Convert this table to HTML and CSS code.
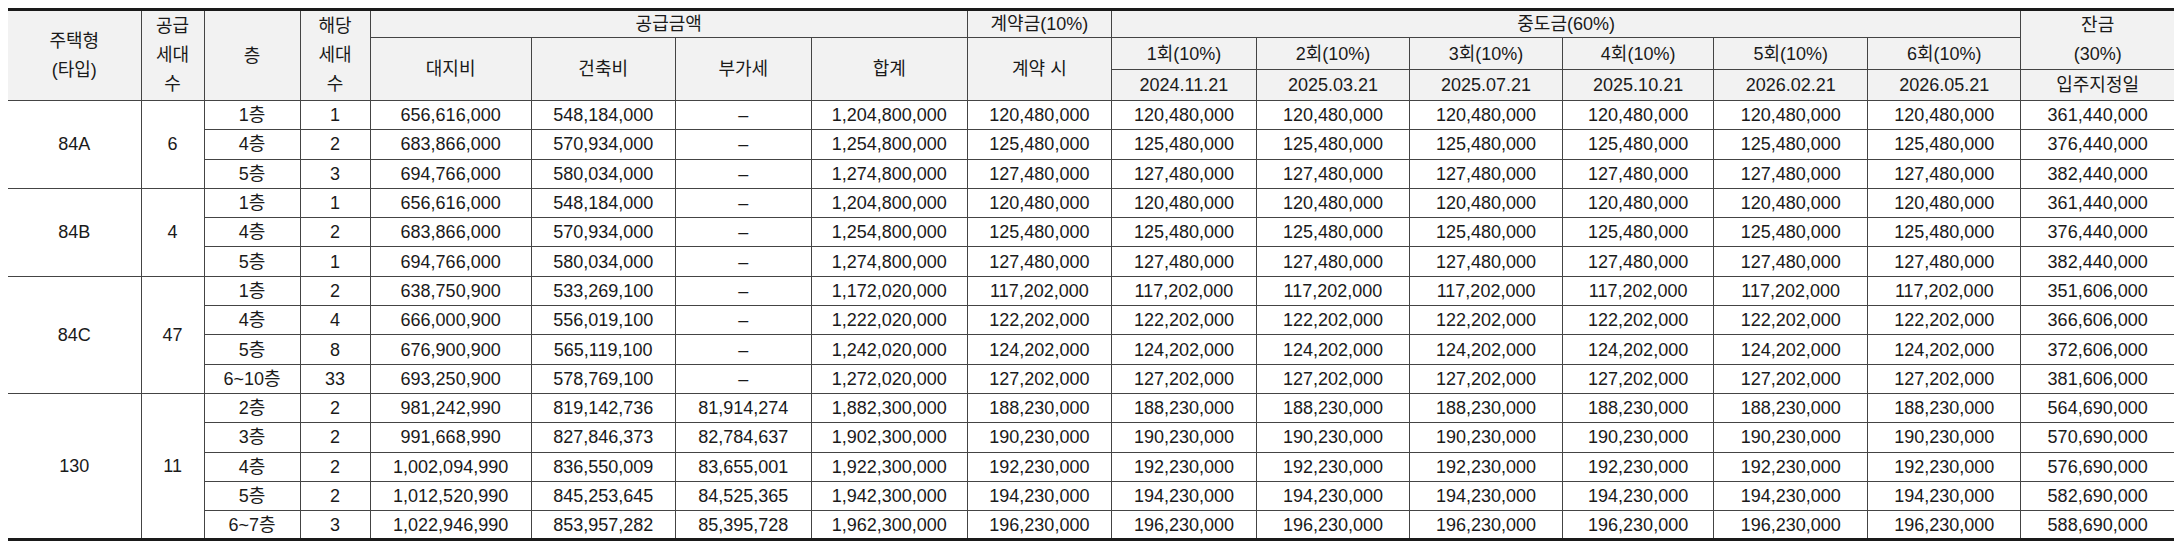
FILE: index.html
```html
<!DOCTYPE html>
<html lang="ko">
<head>
<meta charset="utf-8">
<title>공급금액 및 납부일정</title>
<link rel="stylesheet" href="styles.css">
</head>
<body>
<table class="price">
  <colgroup>
    <col class="c-type"><col class="c-sup"><col class="c-floor"><col class="c-units">
    <col class="c-land"><col class="c-build"><col class="c-vat"><col class="c-sum">
    <col class="c-dep">
    <col class="c-m1"><col class="c-m2"><col class="c-m3"><col class="c-m4"><col class="c-m5"><col class="c-m6">
    <col class="c-bal">
  </colgroup>
  <thead>
    <tr class="h1">
      <th rowspan="3" class="tall">주택형<br>(타입)</th>
      <th rowspan="3" class="tall">공급<br>세대<br>수</th>
      <th rowspan="3">층</th>
      <th rowspan="3" class="tall">해당<br>세대<br>수</th>
      <th colspan="4">공급금액</th>
      <th>계약금(10%)</th>
      <th colspan="6">중도금(60%)</th>
      <th rowspan="2" class="tall">잔금<br>(30%)</th>
    </tr>
    <tr class="h2">
      <th rowspan="2">대지비</th>
      <th rowspan="2">건축비</th>
      <th rowspan="2">부가세</th>
      <th rowspan="2">합계</th>
      <th rowspan="2">계약 시</th>
      <th>1회(10%)</th>
      <th>2회(10%)</th>
      <th>3회(10%)</th>
      <th>4회(10%)</th>
      <th>5회(10%)</th>
      <th>6회(10%)</th>
    </tr>
    <tr class="h3">
      <th>2024.11.21</th>
      <th>2025.03.21</th>
      <th>2025.07.21</th>
      <th>2025.10.21</th>
      <th>2026.02.21</th>
      <th>2026.05.21</th>
      <th>입주지정일</th>
    </tr>
  </thead>
  <tbody>
    <tr class="grp">
      <td rowspan="3">84A</td><td rowspan="3">6</td>
      <td>1층</td><td>1</td><td>656,616,000</td><td>548,184,000</td><td>–</td><td>1,204,800,000</td><td>120,480,000</td>
      <td>120,480,000</td><td>120,480,000</td><td>120,480,000</td><td>120,480,000</td><td>120,480,000</td><td>120,480,000</td><td>361,440,000</td>
    </tr>
    <tr>
      <td>4층</td><td>2</td><td>683,866,000</td><td>570,934,000</td><td>–</td><td>1,254,800,000</td><td>125,480,000</td>
      <td>125,480,000</td><td>125,480,000</td><td>125,480,000</td><td>125,480,000</td><td>125,480,000</td><td>125,480,000</td><td>376,440,000</td>
    </tr>
    <tr>
      <td>5층</td><td>3</td><td>694,766,000</td><td>580,034,000</td><td>–</td><td>1,274,800,000</td><td>127,480,000</td>
      <td>127,480,000</td><td>127,480,000</td><td>127,480,000</td><td>127,480,000</td><td>127,480,000</td><td>127,480,000</td><td>382,440,000</td>
    </tr>
    <tr class="grp">
      <td rowspan="3">84B</td><td rowspan="3">4</td>
      <td>1층</td><td>1</td><td>656,616,000</td><td>548,184,000</td><td>–</td><td>1,204,800,000</td><td>120,480,000</td>
      <td>120,480,000</td><td>120,480,000</td><td>120,480,000</td><td>120,480,000</td><td>120,480,000</td><td>120,480,000</td><td>361,440,000</td>
    </tr>
    <tr>
      <td>4층</td><td>2</td><td>683,866,000</td><td>570,934,000</td><td>–</td><td>1,254,800,000</td><td>125,480,000</td>
      <td>125,480,000</td><td>125,480,000</td><td>125,480,000</td><td>125,480,000</td><td>125,480,000</td><td>125,480,000</td><td>376,440,000</td>
    </tr>
    <tr>
      <td>5층</td><td>1</td><td>694,766,000</td><td>580,034,000</td><td>–</td><td>1,274,800,000</td><td>127,480,000</td>
      <td>127,480,000</td><td>127,480,000</td><td>127,480,000</td><td>127,480,000</td><td>127,480,000</td><td>127,480,000</td><td>382,440,000</td>
    </tr>
    <tr class="grp">
      <td rowspan="4">84C</td><td rowspan="4">47</td>
      <td>1층</td><td>2</td><td>638,750,900</td><td>533,269,100</td><td>–</td><td>1,172,020,000</td><td>117,202,000</td>
      <td>117,202,000</td><td>117,202,000</td><td>117,202,000</td><td>117,202,000</td><td>117,202,000</td><td>117,202,000</td><td>351,606,000</td>
    </tr>
    <tr>
      <td>4층</td><td>4</td><td>666,000,900</td><td>556,019,100</td><td>–</td><td>1,222,020,000</td><td>122,202,000</td>
      <td>122,202,000</td><td>122,202,000</td><td>122,202,000</td><td>122,202,000</td><td>122,202,000</td><td>122,202,000</td><td>366,606,000</td>
    </tr>
    <tr>
      <td>5층</td><td>8</td><td>676,900,900</td><td>565,119,100</td><td>–</td><td>1,242,020,000</td><td>124,202,000</td>
      <td>124,202,000</td><td>124,202,000</td><td>124,202,000</td><td>124,202,000</td><td>124,202,000</td><td>124,202,000</td><td>372,606,000</td>
    </tr>
    <tr>
      <td>6~10층</td><td>33</td><td>693,250,900</td><td>578,769,100</td><td>–</td><td>1,272,020,000</td><td>127,202,000</td>
      <td>127,202,000</td><td>127,202,000</td><td>127,202,000</td><td>127,202,000</td><td>127,202,000</td><td>127,202,000</td><td>381,606,000</td>
    </tr>
    <tr class="grp">
      <td rowspan="5">130</td><td rowspan="5">11</td>
      <td>2층</td><td>2</td><td>981,242,990</td><td>819,142,736</td><td>81,914,274</td><td>1,882,300,000</td><td>188,230,000</td>
      <td>188,230,000</td><td>188,230,000</td><td>188,230,000</td><td>188,230,000</td><td>188,230,000</td><td>188,230,000</td><td>564,690,000</td>
    </tr>
    <tr>
      <td>3층</td><td>2</td><td>991,668,990</td><td>827,846,373</td><td>82,784,637</td><td>1,902,300,000</td><td>190,230,000</td>
      <td>190,230,000</td><td>190,230,000</td><td>190,230,000</td><td>190,230,000</td><td>190,230,000</td><td>190,230,000</td><td>570,690,000</td>
    </tr>
    <tr>
      <td>4층</td><td>2</td><td>1,002,094,990</td><td>836,550,009</td><td>83,655,001</td><td>1,922,300,000</td><td>192,230,000</td>
      <td>192,230,000</td><td>192,230,000</td><td>192,230,000</td><td>192,230,000</td><td>192,230,000</td><td>192,230,000</td><td>576,690,000</td>
    </tr>
    <tr>
      <td>5층</td><td>2</td><td>1,012,520,990</td><td>845,253,645</td><td>84,525,365</td><td>1,942,300,000</td><td>194,230,000</td>
      <td>194,230,000</td><td>194,230,000</td><td>194,230,000</td><td>194,230,000</td><td>194,230,000</td><td>194,230,000</td><td>582,690,000</td>
    </tr>
    <tr>
      <td>6~7층</td><td>3</td><td>1,022,946,990</td><td>853,957,282</td><td>85,395,728</td><td>1,962,300,000</td><td>196,230,000</td>
      <td>196,230,000</td><td>196,230,000</td><td>196,230,000</td><td>196,230,000</td><td>196,230,000</td><td>196,230,000</td><td>588,690,000</td>
    </tr>
  </tbody>
</table>
</body>
</html>
```
FILE: styles.css
```css
html, body {
  margin: 0;
  padding: 0;
  background: #ffffff;
}
body {
  padding: 8px;
  font-family: "Liberation Sans", "Noto Sans CJK KR", sans-serif;
  color: #1a1a1a;
}
.price {
  width: 2166px;
  table-layout: fixed;
  border-collapse: collapse;
  border-top: 3px solid #1a1a1a;
  border-bottom: 3px solid #1a1a1a;
  font-size: 18px;
}
.c-type { width: 133px; }
.c-sup { width: 63px; }
.c-floor { width: 96px; }
.c-units { width: 70px; }
.c-land { width: 161px; }
.c-build { width: 144px; }
.c-vat { width: 136px; }
.c-sum { width: 156px; }
.c-dep { width: 144px; }
.c-m1 { width: 145px; }
.c-m2 { width: 153px; }
.c-m3 { width: 153px; }
.c-m4 { width: 151px; }
.c-m5 { width: 154px; }
.c-m6 { width: 153px; }
.c-bal { width: 153px; }

.price th,
.price td {
  border: 1px solid #444444;
  padding: 0 2px;
  text-align: center;
  vertical-align: middle;
  white-space: nowrap;
  line-height: 20px;
}
.price th:first-child,
.price td:first-child { border-left: none; }
.price th:last-child,
.price td:last-child { border-right: none; }

.price thead th {
  background: #f2f2f2;
  font-weight: normal;
}
.price thead .tall { line-height: 29px; }
.price .h1 { height: 28px; }
.price .h2 { height: 31px; }
.price .h3 { height: 31px; }
.price tbody tr { height: 29.3px; }
.price tbody tr.grp td { border-top: 1px solid #333333; }
```
